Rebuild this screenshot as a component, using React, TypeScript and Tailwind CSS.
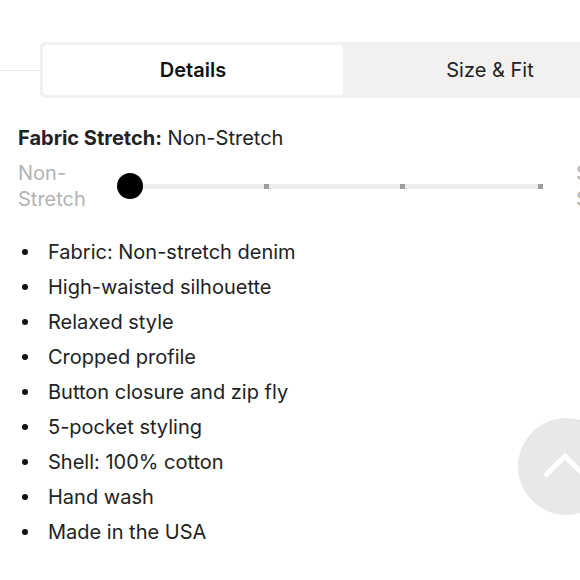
import React from 'react';

const bullets = [
  'Fabric: Non-stretch denim',
  'High-waisted silhouette',
  'Relaxed style',
  'Cropped profile',
  'Button closure and zip fly',
  '5-pocket styling',
  'Shell: 100% cotton',
  'Hand wash',
  'Made in the USA',
];

const App: React.FC = () => {
  return (
    <div className="relative w-[580px] h-[580px] overflow-hidden bg-white text-[#222] font-['Inter',sans-serif]">
      {/* tabs */}
      <div className="flex items-center pt-[42px]">
        <div className="shrink-0 w-[40px] h-px bg-[#e6e6e6]" />
        <div className="flex shrink-0 w-[600px] h-[56px] p-[3px] bg-[#f2f1f0] rounded-[5px]">
          <button className="w-[300px] flex items-center justify-center bg-white rounded-[4px] text-[20px] font-semibold text-[#111]">
            Details
          </button>
          <button className="w-[294px] flex items-center justify-center text-[20px] text-[#222]">
            Size &amp; Fit
          </button>
        </div>
      </div>

      <div className="pl-[18px]">
        <h2 className="mt-[27px] text-[20px] leading-[26px]">
          <span className="font-bold">Fabric Stretch:</span> Non-Stretch
        </h2>

        {/* stretch slider */}
        <div className="flex w-[660px] mt-[9px]">
          <div className="w-[100px] text-[20px] leading-[26px] text-[#b3b3b3]">
            Non-
            <br />
            Stretch
          </div>
          <div className="relative w-[434px] h-[52px] ml-[-1px]">
            <div className="absolute left-[13px] w-[413px] top-[24px] h-[5px] bg-[#ececec]" />
            <div className="absolute left-[147px] top-[24px] w-[5px] h-[5px] bg-[#9e9e9e]" />
            <div className="absolute left-[283px] top-[24px] w-[5px] h-[5px] bg-[#9e9e9e]" />
            <div className="absolute left-[421px] top-[24px] w-[5px] h-[5px] bg-[#9e9e9e]" />
            <div className="absolute left-0 top-[13px] w-[26px] h-[26px] rounded-full bg-black" />
          </div>
          <div className="ml-[25px] text-[20px] leading-[26px] text-[#b3b3b3]">
            Super
            <br />
            Stretch
          </div>
        </div>

        <ul className="mt-[22px]">
          {bullets.map((b) => (
            <li key={b} className="flex items-center h-[35px] text-[20px]">
              <span className="w-[6px] h-[6px] rounded-full bg-[#111] ml-[4px] mr-[20px]" />
              {b}
            </li>
          ))}
        </ul>

        <p className="mt-[27px] text-[20px] font-semibold">Style: CS1PS-1115</p>
      </div>

      {/* back to top */}
      <button className="absolute left-[518px] top-[418px] w-[97px] h-[97px] rounded-full bg-[#e8e8e8] flex items-center justify-center">
        <svg width="46" height="28" viewBox="0 0 46 28" className="-ml-[4px] -mt-[4px]">
          <polyline points="3,25 23,5 43,25" fill="none" stroke="white" strokeWidth="5" />
        </svg>
      </button>
    </div>
  );
};

export default App;
